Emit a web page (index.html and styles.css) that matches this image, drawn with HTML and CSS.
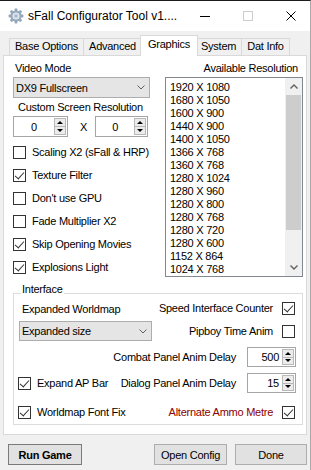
FILE: index.html
```html
<!DOCTYPE html>
<html lang="en">
<head>
    <meta charset="UTF-8">
    <meta name="viewport" content="width=device-width, initial-scale=1.0">
    <title>sFall Configurator Tool</title>
    <link rel="stylesheet" href="styles.css">
</head>
<body>
    <div class="window">
        <div class="titlebar">
            <svg class="app-icon" width="16" height="16" viewBox="0 0 16 16">
                <g fill="#95a7ba">
                    <circle cx="8" cy="8" r="5.6"/>
                    <rect x="6.6" y="0.6" width="2.8" height="14.8" rx="0.6"/>
                    <rect x="6.6" y="0.6" width="2.8" height="14.8" rx="0.6" transform="rotate(45 8 8)"/>
                    <rect x="6.6" y="0.6" width="2.8" height="14.8" rx="0.6" transform="rotate(90 8 8)"/>
                    <rect x="6.6" y="0.6" width="2.8" height="14.8" rx="0.6" transform="rotate(135 8 8)"/>
                </g>
                <circle cx="8" cy="8" r="3.6" fill="#dde5ee"/>
                <circle cx="8" cy="8" r="1.7" fill="#a9b8c8"/>
            </svg>
            <span class="title">sFall Configurator Tool v1....</span>
            <div class="caption-buttons">
                <span class="cap-min"></span>
                <span class="cap-max"></span>
                <svg class="cap-close" width="10" height="10" viewBox="0 0 10 10">
                    <path d="M0.5 0.5 L9.5 9.5 M9.5 0.5 L0.5 9.5" stroke="#000" stroke-width="1"/>
                </svg>
            </div>
        </div>

        <div class="tabs">
            <div class="tab">Base Options</div>
            <div class="tab">Advanced</div>
            <div class="tab active">Graphics</div>
            <div class="tab">System</div>
            <div class="tab">Dat Info</div>
        </div>

        <div class="panel">
            <div class="top">
                <div class="left-col">
                    <div class="field-label">Video Mode</div>
                    <div class="combo">
                        <span>DX9 Fullscreen</span>
                        <svg width="8" height="5" viewBox="0 0 8 5"><polyline points="0.5,0.5 4,4 7.5,0.5" fill="none" stroke="#606060"/></svg>
                    </div>
                    <div class="field-label indent">Custom Screen Resolution</div>
                    <div class="res-row">
                        <div class="spinner center w55">
                            <span class="spin-value">0</span>
                            <div class="spin-btns"><span class="spin-up"></span><span class="spin-down"></span></div>
                        </div>
                        <span class="times">X</span>
                        <div class="spinner center w53">
                            <span class="spin-value">0</span>
                            <div class="spin-btns"><span class="spin-up"></span><span class="spin-down"></span></div>
                        </div>
                    </div>
                    <div class="check-list">
                        <label class="check"><span class="box"></span>Scaling X2 (sFall &amp; HRP)</label>
                        <label class="check"><span class="box checked"></span>Texture Filter</label>
                        <label class="check"><span class="box"></span>Don't use GPU</label>
                        <label class="check"><span class="box"></span>Fade Multiplier X2</label>
                        <label class="check"><span class="box checked"></span>Skip Opening Movies</label>
                        <label class="check"><span class="box checked"></span>Explosions Light</label>
                    </div>
                </div>
                <div class="right-col">
                    <div class="field-label right">Available Resolution</div>
                    <div class="listbox">
                        <ul class="items" id="res-list"></ul>
                        <div class="scrollbar">
                            <div class="scroll-arrow"><svg width="8" height="5" viewBox="0 0 8 5"><polyline points="0.5,4.5 4,1 7.5,4.5" fill="none" stroke="#606060" stroke-width="1.4"/></svg></div>
                            <div class="scroll-track"><div class="scroll-thumb"></div></div>
                            <div class="scroll-arrow"><svg width="8" height="5" viewBox="0 0 8 5"><polyline points="0.5,0.5 4,4 7.5,0.5" fill="none" stroke="#606060" stroke-width="1.4"/></svg></div>
                        </div>
                    </div>
                </div>
            </div>

            <div class="group">
                <span class="legend">Interface</span>
                <div class="g-row r1">
                    <span class="plain-label">Expanded Worldmap</span>
                    <label class="check rev">Speed Interface Counter<span class="box checked"></span></label>
                </div>
                <div class="g-row r2">
                    <div class="combo small">
                        <span>Expanded size</span>
                        <svg width="8" height="5" viewBox="0 0 8 5"><polyline points="0.5,0.5 4,4 7.5,0.5" fill="none" stroke="#606060"/></svg>
                    </div>
                    <label class="check rev">Pipboy Time Anim<span class="box"></span></label>
                </div>
                <div class="g-row r3">
                    <div class="delay">
                        <span>Combat Panel Anim Delay</span>
                        <div class="spinner w49">
                            <span class="spin-value">500</span>
                            <div class="spin-btns"><span class="spin-up"></span><span class="spin-down"></span></div>
                        </div>
                    </div>
                </div>
                <div class="g-row r4">
                    <label class="check"><span class="box checked"></span>Expand AP Bar</label>
                    <div class="delay">
                        <span>Dialog Panel Anim Delay</span>
                        <div class="spinner w49">
                            <span class="spin-value">15</span>
                            <div class="spin-btns"><span class="spin-up"></span><span class="spin-down"></span></div>
                        </div>
                    </div>
                </div>
                <div class="g-row r5">
                    <label class="check"><span class="box checked"></span>Worldmap Font Fix</label>
                    <label class="check rev warn">Alternate Ammo Metre<span class="box checked"></span></label>
                </div>
            </div>
        </div>

        <div class="footer">
            <button class="btn default">Run Game</button>
            <button class="btn push">Open Config</button>
            <button class="btn">Done</button>
        </div>
    </div>
    <script>
        var resolutions = ['1920 X 1080', '1680 X 1050', '1600 X 900', '1440 X 900', '1400 X 1050',
            '1366 X 768', '1360 X 768', '1280 X 1024', '1280 X 960', '1280 X 800', '1280 X 768',
            '1280 X 720', '1280 X 600', '1152 X 864', '1024 X 768'];
        var list = document.getElementById('res-list');
        resolutions.forEach(function (r) {
            var li = document.createElement('li');
            li.textContent = r;
            list.appendChild(li);
        });
    </script>
</body>
</html>
```

FILE: styles.css
```css
* {
    box-sizing: border-box;
}
body {
    margin: 0;
    width: 311px;
    height: 470px;
    overflow: hidden;
    background-color: #f0f0f0;
    font-family: "Liberation Sans", Arial, sans-serif;
    font-size: 11px;
    letter-spacing: -0.25px;
    color: #000;
}
.window {
    height: 470px;
    border-top: 1px solid #1c1c1c;
    border-right: 1px solid #a9a9a9;
}

/* title bar */
.titlebar {
    height: 30px;
    background-color: #fff;
    display: flex;
    align-items: center;
    padding-left: 8px;
}
.title {
    margin-left: 4px;
    font-size: 12px;
    letter-spacing: 0;
}
.caption-buttons {
    margin-left: auto;
    padding-right: 14px;
    display: flex;
    align-items: center;
    gap: 33px;
}
.cap-min {
    width: 10px;
    height: 1px;
    background-color: #000;
}
.cap-max {
    width: 10px;
    height: 10px;
    border: 1px solid #cccccc;
}
.cap-close {
    display: block;
}

/* tabs */
.tabs {
    display: flex;
    align-items: flex-end;
    margin: 4px 0 0 9px;
    height: 20px;
}
.tab {
    height: 17px;
    line-height: 15px;
    padding: 0 5px;
    border: 1px solid #d9d9d9;
    border-bottom: none;
    margin-left: -1px;
    background-color: #f0f0f0;
}
.tab:first-child {
    margin-left: 0;
}
.tab.active {
    height: 21px;
    line-height: 17px;
    margin: 0 -2px -1px -2px;
    padding: 0 7px;
    background-color: #fff;
    position: relative;
    z-index: 1;
}

/* panel */
.panel {
    margin-left: 3px;
    width: 304px;
    height: 380px;
    border: 1px solid #d9d9d9;
    background-color: #fff;
    padding: 6px 3px 0 9px;
}
.top {
    display: flex;
}
.left-col {
    width: 137px;
}
.right-col {
    width: 138px;
    margin-left: 15px;
}
.field-label {
    height: 13px;
    line-height: 13px;
    padding-left: 2px;
}
.field-label.indent {
    margin-top: 3px;
    padding-left: 5px;
}
.field-label.right {
    text-align: right;
    padding-right: 5px;
}
.combo {
    margin-top: 2px;
    height: 21px;
    border: 1px solid #adadad;
    background-color: #e5e5e5;
    display: flex;
    align-items: center;
    justify-content: space-between;
    padding: 0 4px 0 2px;
}
.combo.small {
    margin: 0 0 0 1px;
    width: 133px;
    height: 20px;
}

/* spinners */
.res-row {
    margin-top: 2px;
    display: flex;
    align-items: center;
}
.times {
    margin: 0 8px 0 12px;
}
.spinner {
    height: 21px;
    border: 1px solid #a5a5a5;
    background-color: #fff;
    display: flex;
    align-items: center;
}
.spinner.w55 { width: 55px; }
.spinner.w53 { width: 53px; }
.spinner.w49 { width: 49px; height: 20px; margin-right: -1px; }
.spin-value {
    flex: 1;
    text-align: right;
    padding-right: 3px;
}
.spinner.center .spin-value {
    text-align: center;
    padding-right: 0;
}
.spin-btns {
    width: 12px;
    align-self: stretch;
    margin: 1px 1px 1px 0;
    display: flex;
    flex-direction: column;
}
.spin-up, .spin-down {
    flex: 1;
    border: 1px solid #b8b8b8;
    background-color: #ececec;
    display: flex;
    align-items: center;
    justify-content: center;
}
.spin-down {
    border-top: none;
}
.spin-up::after, .spin-down::after {
    content: "";
    border-left: 3px solid transparent;
    border-right: 3px solid transparent;
}
.spin-up::after {
    border-bottom: 3px solid #000;
}
.spin-down::after {
    border-top: 3px solid #000;
}

/* checkboxes */
.check-list {
    margin-top: 9px;
    display: flex;
    flex-direction: column;
    gap: 10px;
}
.check {
    display: flex;
    align-items: center;
    height: 13px;
    line-height: 13px;
    gap: 6px;
}
.check.rev {
    gap: 9px;
}
.check.warn {
    color: #8b0000;
}
.box {
    width: 13px;
    height: 13px;
    border: 1px solid #333;
    background-color: #fff;
    flex-shrink: 0;
    position: relative;
}
.box.checked::after {
    content: "";
    position: absolute;
    left: 3px;
    top: 0px;
    width: 4px;
    height: 8px;
    border-right: 1px solid #333;
    border-bottom: 1px solid #333;
    transform: rotate(42deg);
}

/* resolution list */
.listbox {
    margin-top: 2px;
    height: 200px;
    border: 1px solid #828790;
    display: flex;
}
.items {
    flex: 1;
    list-style: none;
    margin: 0;
    padding: 3px 0 0 4px;
}
.items li {
    height: 13px;
    line-height: 13px;
}
.scrollbar {
    width: 17px;
    background-color: #f0f0f0;
    display: flex;
    flex-direction: column;
}
.scroll-arrow {
    height: 17px;
    display: flex;
    align-items: center;
    justify-content: center;
}
.scroll-track {
    flex: 1;
    padding: 0 1px;
}
.scroll-thumb {
    height: 135px;
    background-color: #cdcdcd;
}

/* interface group */
.group {
    position: relative;
    margin-top: 16px;
    height: 132px;
    border: 1px solid #dcdcdc;
    padding: 7px 7px 5px 4px;
}
.legend {
    position: absolute;
    left: 7px;
    top: -11px;
    padding: 0 1px;
    line-height: 13px;
    background-color: #fff;
}
.g-row {
    display: flex;
    align-items: center;
    justify-content: space-between;
}
.r1 { height: 15px; }
.r2 { height: 20px; margin-top: 5px; }
.r3 { height: 20px; margin-top: 6px; justify-content: flex-end; }
.r4 { height: 20px; margin-top: 6px; }
.r5 { height: 13px; margin-top: 13px; }
.plain-label {
    margin-left: 4px;
}
.delay {
    display: flex;
    align-items: center;
    gap: 11px;
}

/* buttons */
.footer {
    display: flex;
    margin-top: 9px;
    padding: 0 3px 0 8px;
}
.btn {
    height: 21px;
    padding: 0;
    border: 1px solid #adadad;
    background-color: #e1e1e1;
    font-family: inherit;
    font-size: 11px;
    letter-spacing: -0.25px;
    color: #000;
}
.btn.default {
    width: 74px;
    font-weight: bold;
    border-color: #7a7a7a;
}
.btn.push {
    width: 73px;
    margin-left: auto;
}
.btn:last-child {
    width: 72px;
    margin-left: 8px;
}
```
